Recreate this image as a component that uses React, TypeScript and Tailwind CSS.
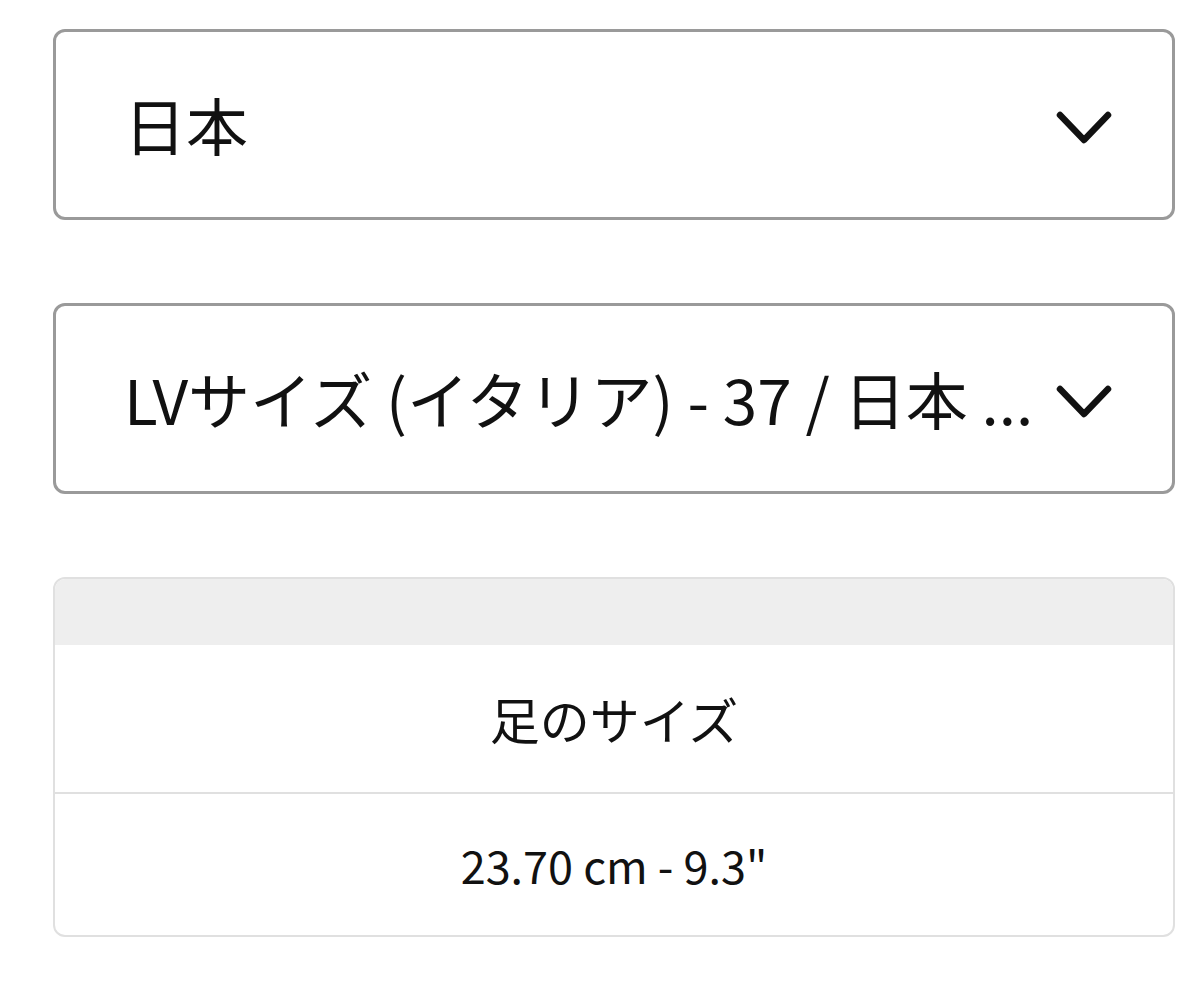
const font = { fontFamily: '"Noto Sans CJK JP", "Noto Sans", sans-serif' };

function Chevron() {
  return (
    <svg width="56" height="36" viewBox="0 0 56 36" className="shrink-0 text-[#111] mt-[6px]" fill="none">
      <polyline points="4,5 28,30 52,5" stroke="currentColor" strokeWidth="6.5" strokeLinecap="round" strokeLinejoin="round" />
    </svg>
  );
}

function Select({ label }: { label: string }) {
  return (
    <div className="flex items-center gap-[16px] h-[191px] rounded-[12px] border-[3px] border-[#9a9a9a] bg-white pl-[68px] pr-[60px]">
      <span className="flex-1 text-[62px] leading-normal text-[#111] whitespace-nowrap">{label}</span>
      <Chevron />
    </div>
  );
}

export default function App() {
  return (
    <div className="w-[1200px] h-[994px] bg-white pt-[29px] pl-[53px] pr-[25px]" style={font}>
      <div className="flex flex-col gap-[83px]">
        <Select label="日本" />
        <Select label="LVサイズ (イタリア) - 37 / 日本 ..." />
      </div>
      <div className="mt-[83px] rounded-[12px] border-2 border-[#e0e0e0] overflow-hidden">
        <div className="h-[66px] bg-[#eeeeee]" />
        <div className="h-[149px] flex items-center justify-center text-[50px] text-[#111] border-b-2 border-[#e0e0e0]">足のサイズ</div>
        <div className="h-[141px] flex items-center justify-center text-[45px] text-[#111]">23.70 cm - 9.3"</div>
      </div>
    </div>
  );
}
